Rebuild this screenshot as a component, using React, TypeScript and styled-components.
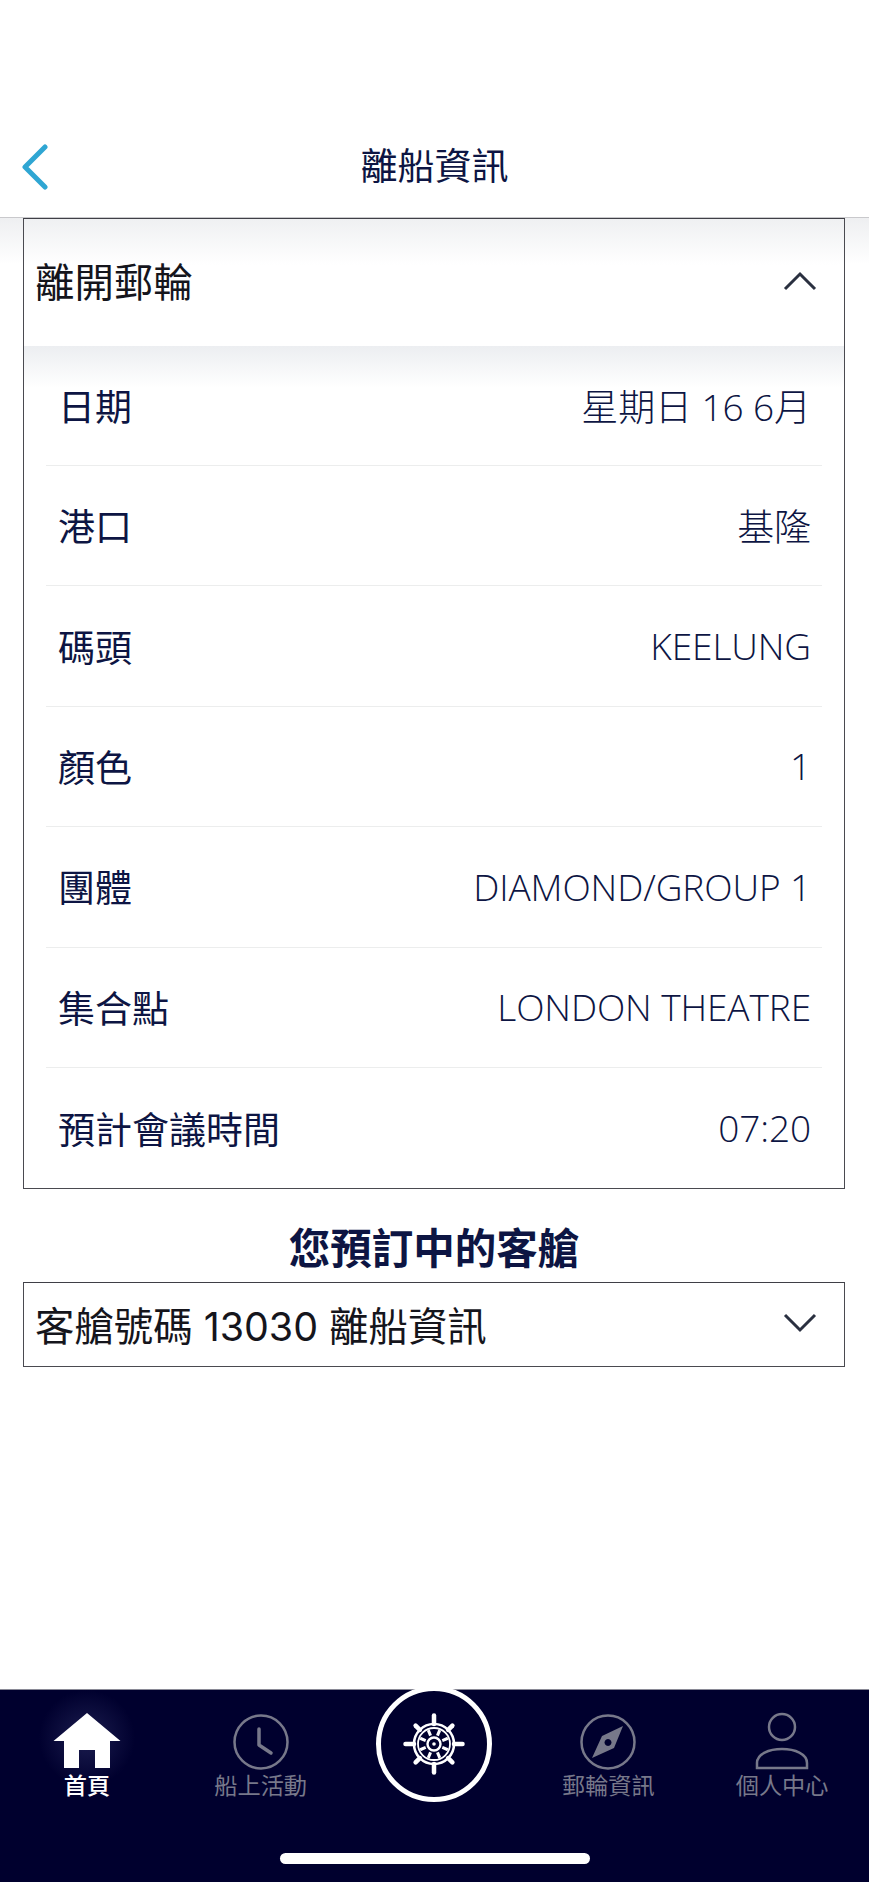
import React from 'react';
import styled, { createGlobalStyle } from 'styled-components';

const Global = createGlobalStyle`
  html, body { margin: 0; padding: 0; background: #fff; }
  #root { width: 869px; height: 1882px; overflow: hidden; }
`;
const CJK = `Inter, "Noto Sans CJK TC", sans-serif`;

const Page = styled.div`
  width: 869px; height: 1882px; display: flex; flex-direction: column;
  font-family: ${CJK}; background: #fff; color: #0d1543;
`;
const TopBar = styled.header`
  height: 218px; flex: none; display: grid; grid-template-columns: 1fr auto 1fr;
  align-items: end; padding-bottom: 27px; box-sizing: border-box;
  border-bottom: 1px solid #c9c9cc;
`;
const BackButton = styled.div` padding-left: 20px; display: flex; height: 46px; align-items: center; `;
const Title = styled.h1`
  margin: 0; font-size: 37px; font-weight: 400; line-height: 46px; color: #0d1543;
`;
const Main = styled.main`
  flex: 1; padding: 0 24px 0 23px;
  background: linear-gradient(#eeeff1 0, #fff 46px, #fff 100%);
`;
const Panel = styled.section`
  border: 1px solid #4a4a50; border-top-color: #3f3f46; background: #fff;
`;
const AccordionHead = styled.div<{ $tall?: boolean }>`
  height: ${p => (p.$tall ? 127 : 83)}px; display: flex; align-items: center; justify-content: space-between;
  padding: 0 27px 3px 11px; box-sizing: border-box; font-size: 39.4px; color: #15151c;
  background: ${p => (p.$tall ? 'linear-gradient(#eff0f2 0, #fff 46px)' : '#fff')};
`;
const HeadText = styled.span<{ $raised?: boolean }>`
  padding-bottom: ${p => (p.$raised ? 4 : 0)}px;
`;
const Chevron = styled.svg` width: 34px; height: 22px; display: block; `;
const Rows = styled.div`
  background: linear-gradient(#eceef1 0, #fff 42px);
  padding: 0 22px 0 22px;
`;
const Row = styled.div<{ $first?: boolean; $last?: boolean }>`
  height: ${p => (p.$first ? 120 : 120.4)}px; box-sizing: border-box;
  display: flex; align-items: center; justify-content: space-between;
  padding: 0 11px ${p => (p.$first ? 2 : 1)}px 12px;
  ${p => (p.$last ? '' : 'border-bottom: 1px solid #eceded;')}
`;
const Label = styled.span` font-size: 37px; font-weight: 400; color: #0d1543; `;
const Value = styled.span`
  font-size: 37px; font-weight: 300; color: #0d1543; letter-spacing: -0.1px;
  font-family: "Open Sans", "Noto Sans CJK TC", sans-serif;
`;
const CabinsTitle = styled.h2`
  margin: 0; height: 93px; box-sizing: border-box; padding-top: 32px; text-align: center;
  font-size: 41.5px; font-weight: 700; line-height: 56px; color: #0d1543;
`;
const TabBar = styled.nav`
  position: relative; flex: none; height: 193px; background: #00002e; border-top: 1px solid #8a8a96;
  box-sizing: border-box; display: grid; grid-template-columns: repeat(5, 1fr);
`;
const Tab = styled.div<{ $active?: boolean }>`
  display: flex; flex-direction: column; align-items: center; padding-top: 22px;
  color: ${p => (p.$active ? '#fff' : '#77788a')};
  font-size: 23.2px; line-height: 28px; font-weight: ${p => (p.$active ? 500 : 400)};
  ${p => p.$active ? 'background: radial-gradient(circle at 50% 48px, rgba(70,74,130,.4) 0, rgba(0,0,46,0) 48px);' : ''}
`;
const TabIcon = styled.svg` width: 70px; height: 60px; display: block; `;
const WheelSlot = styled.div` position: relative; `;
const WheelButton = styled.div`
  position: absolute; left: 50%; top: -4px; margin-left: -58px; width: 116px; height: 116px;
  border-radius: 50%; border: 5px solid #fff; box-sizing: border-box; background: #00002e;
  display: flex; align-items: center; justify-content: center;
`;
const HomeBar = styled.div`
  position: absolute; left: 280px; top: 163px; width: 310px; height: 11px; border-radius: 6px; background: #fff;
`;

const rows: [string, string][] = [
  ['日期', '星期日 16 6月'], ['港口', '基隆'], ['碼頭', 'KEELUNG'], ['顏色', '1'],
  ['團體', 'DIAMOND/GROUP 1'], ['集合點', 'LONDON THEATRE'], ['預計會議時間', '07:20'],
];

const Wheel = () => {
  const spokes = [0, 45, 90, 135, 180, 225, 270, 315];
  return (
    <svg width="62" height="62" viewBox="-31 -31 62 62" fill="none" stroke="#fff">
      {spokes.map((a, i) => (
        <g key={a} transform={`rotate(${a})`}>
          <line x1="0" y1="-20" x2="0" y2={i % 2 ? -26 : -28.5} strokeWidth="4.5" strokeLinecap="round" />
          <line x1="0" y1="-9" x2="0" y2="-15" strokeWidth="3" transform="rotate(22.5)" />
        </g>
      ))}
      <circle r="20" strokeWidth="2.6" />
      <circle r="16" strokeWidth="1.8" />
      <circle r="6.5" strokeWidth="2.4" />
      <circle r="1.8" fill="#fff" strokeWidth="0" />
    </svg>
  );
};

export default function App() {
  return (
    <Page>
      <Global />
      <TopBar>
        <BackButton>
          <svg width="30" height="46" viewBox="0 0 30 46" fill="none">
            <path d="M25 3 L5 23 L25 43" stroke="#2fa6d3" strokeWidth="5" strokeLinecap="round" strokeLinejoin="round" />
          </svg>
        </BackButton>
        <Title>離船資訊</Title>
        <span />
      </TopBar>
      <Main>
        <Panel>
          <AccordionHead $tall>
            <HeadText $raised>離開郵輪</HeadText>
            <Chevron viewBox="0 0 34 22" fill="none"><path d="M2 19 L17 4 L32 19" stroke="#2a3040" strokeWidth="3" /></Chevron>
          </AccordionHead>
          <Rows>
            {rows.map(([k, v], i) => (
              <Row key={k} $first={i === 0} $last={i === rows.length - 1}>
                <Label>{k}</Label>
                <Value>{v}</Value>
              </Row>
            ))}
          </Rows>
        </Panel>
        <CabinsTitle>您預訂中的客艙</CabinsTitle>
        <Panel>
          <AccordionHead>
            <HeadText>客艙號碼 13030 離船資訊</HeadText>
            <Chevron viewBox="0 0 34 22" fill="none"><path d="M2 3 L17 18 L32 3" stroke="#2a3040" strokeWidth="3" /></Chevron>
          </AccordionHead>
        </Panel>
      </Main>
      <TabBar>
        <Tab $active>
          <TabIcon viewBox="0 0 70 60">
            <path fill="#fff" d="M35 1 L68.5 29 L58 29 L58 56 L43 56 L43 38 L27 38 L27 56 L12 56 L12 29 L1.5 29 Z" />
          </TabIcon>
          首頁
        </Tab>
        <Tab>
          <TabIcon viewBox="0 0 70 60" fill="none" stroke="#77788a">
            <circle cx="35" cy="30" r="26.5" strokeWidth="2.5" />
            <path d="M33 17 L33 33 L45 41" strokeWidth="3.5" strokeLinecap="round" strokeLinejoin="round" />
          </TabIcon>
          船上活動
        </Tab>
        <WheelSlot>
          <WheelButton><Wheel /></WheelButton>
        </WheelSlot>
        <Tab>
          <TabIcon viewBox="0 0 70 60" fill="none" stroke="#77788a">
            <circle cx="35" cy="30" r="26.5" strokeWidth="2.5" />
            <path fill="#77788a" stroke="none" fillRule="evenodd" d="M50 14 L41 36 L19 46 L29 24 Z M35 27 a3.5 3.5 0 1 0 .01 0 Z" />
          </TabIcon>
          郵輪資訊
        </Tab>
        <Tab>
          <TabIcon viewBox="0 0 70 60" fill="none" stroke="#77788a" strokeWidth="2.5">
            <circle cx="35" cy="15" r="13" />
            <path d="M10 56 L10 51 C10 42 22 37 35 37 C48 37 60 42 60 51 L60 56 Z" />
          </TabIcon>
          個人中心
        </Tab>
        <HomeBar />
      </TabBar>
    </Page>
  );
}
